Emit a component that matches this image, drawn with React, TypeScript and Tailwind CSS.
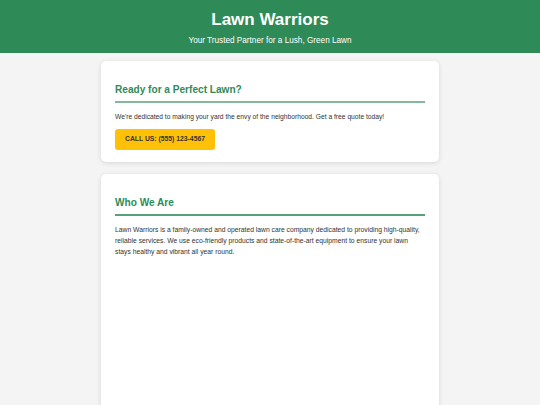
export default function App() {
  return (
    <div className="min-h-screen bg-[#f4f4f4] font-['Liberation_Sans',Arial,sans-serif] text-[#333]">
      <header className="bg-[#2e8b57] text-white text-center pt-[10px] pb-[7px]">
        <h1 className="text-[17px] leading-[20px] font-bold">Lawn Warriors</h1>
        <p className="text-[8.2px] leading-[11px] mt-[5px]">Your Trusted Partner for a Lush, Green Lawn</p>
      </header>

      <main className="w-[338px] mx-auto pt-[8px] flex flex-col gap-[12px]">
        <section className="bg-white rounded-[5px] shadow-[0_1px_5px_rgba(0,0,0,0.12)] pl-[14px] pr-[14px] pt-[14px] pb-[12px]">
          <h2 className="mt-[9px] text-[10.1px] leading-[12px] font-bold text-[#2e8b57] pb-[5px] border-b-2 border-[#2e8b57]/60">
            Ready for a Perfect Lawn?
          </h2>
          <p className="mt-[8px] text-[6.7px] leading-[11px]">
            We're dedicated to making your yard the envy of the neighborhood. Get a free quote today!
          </p>
          <button className="mt-[7px] bg-[#ffc107] rounded-[3px] h-[21px] w-[100px] text-[6.8px] font-bold text-[#333]">
            CALL US: (555) 123-4567
          </button>
        </section>

        <section className="bg-white rounded-[5px] shadow-[0_1px_5px_rgba(0,0,0,0.12)] px-[14px] pt-[14px] h-[260px]">
          <h2 className="mt-[9px] text-[10.1px] leading-[12px] font-bold text-[#2e8b57] pb-[5px] border-b-2 border-[#2e8b57]/80">
            Who We Are
          </h2>
          <p className="mt-[8px] pr-[4px] text-[6.75px] leading-[11px]">
            Lawn Warriors is a family-owned and operated lawn care company dedicated to providing high-quality,
            reliable services. We use eco-friendly products and state-of-the-art equipment to ensure your lawn
            stays healthy and vibrant all year round.
          </p>
        </section>
      </main>
    </div>
  )
}
